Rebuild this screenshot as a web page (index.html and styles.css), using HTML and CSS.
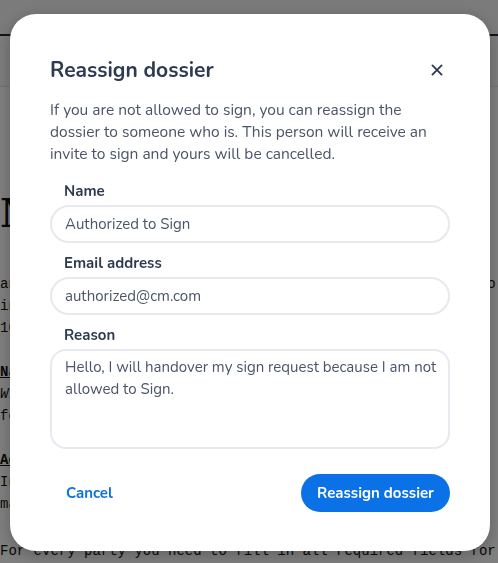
FILE: index.html
```html
<!DOCTYPE html>
<html>
<head>
  <title>Reassign dossier</title>
  <meta charset="utf-8">
  <link rel="stylesheet" href="styles.css">
</head>
<body>
  <div class="page">
    <div class="topbar"></div>
    <div class="subbar"></div>
    <div class="doc">
      <h1 class="doc-title">Mandate form:</h1>
      <p class="doc-lead">and signers are required to read this document carefully so
        in signing on behalf of an organisation, the authority to 10
        s.</p>
      <p><span class="doc-head">Name of the signing party</span><br>
        <em>Write the full legal name of the person or company minimum</em><br>
        fo the agreement as registered.</p>
      <p><span class="doc-head">Address of the signing party</span><br>
        In case the signing party is located outside the country a<br>
        mailing address.</p>
      <p class="doc-last">For every party you need to fill in all required fields for</p>
    </div>
  </div>

  <div class="overlay">
    <div class="modal">
      <div class="modal-header">
        <h2>Reassign dossier</h2>
        <button class="close-btn" aria-label="Close">
          <svg viewBox="0 0 24 24" fill="none" stroke="currentColor">
            <path stroke-linecap="round" stroke-width="2.2" d="M6.5 6.5l11 11M17.5 6.5l-11 11" />
          </svg>
        </button>
      </div>

      <p class="intro">If you are not allowed to sign, you can reassign the dossier to someone who is. This person will receive an invite to sign and yours will be cancelled.</p>

      <div class="fields">
        <label class="field">
          <span class="field-label">Name</span>
          <input class="input" type="text" value="Authorized to Sign">
        </label>
        <label class="field">
          <span class="field-label">Email address</span>
          <input class="input" type="email" value="authorized@cm.com">
        </label>
        <label class="field">
          <span class="field-label">Reason</span>
          <textarea class="input textarea">Hello, I will handover my sign request because I am not allowed to Sign.</textarea>
        </label>
      </div>

      <div class="modal-footer">
        <button class="cancel-btn">Cancel</button>
        <button class="primary-btn">Reassign dossier</button>
      </div>
    </div>
  </div>
</body>
</html>
```

FILE: styles.css
```css
body {
  margin: 0;
  font-family: "Nunito", "Lato", "Noto Sans", sans-serif;
  background-color: #ffffff;
  overflow: hidden;
}

.page {
  width: 498px;
  height: 563px;
  overflow: hidden;
}

.topbar {
  height: 34px;
  background-color: #f6f6f6;
  border-bottom: 2px solid #1f2937;
}

.subbar {
  height: 50px;
  background-color: #fafafa;
  border-bottom: 1px solid #e5e5e5;
}

.doc {
  font-family: "Liberation Mono", monospace;
  font-size: 14px;
  line-height: 22px;
  color: #111111;
}

.doc-title {
  font-family: "DejaVu Serif", serif;
  font-size: 40px;
  line-height: 48px;
  font-weight: 900;
  margin: 0;
  padding-top: 102px;
  display: flex;
  justify-content: space-between;
}

.doc p {
  margin: 22px 0 0;
}

.doc .doc-lead {
  margin-top: 36px;
}

.doc .doc-last {
  margin-top: 25px;
}

.doc-head {
  font-weight: bold;
  text-decoration: underline;
}

.overlay {
  position: fixed;
  inset: 0;
  background-color: rgba(0, 0, 0, 0.5);
}

.modal {
  position: absolute;
  top: 14px;
  left: 10px;
  width: 480px;
  box-sizing: border-box;
  padding: 42px 40px 39px;
  background-color: #ffffff;
  border-radius: 26px;
  box-shadow: 0 4px 16px rgba(0, 0, 0, 0.25);
  color: #2e3a50;
}

.modal-header {
  display: flex;
  align-items: center;
  justify-content: space-between;
}

h2 {
  margin: 0;
  font-size: 21px;
  line-height: 28px;
  font-weight: 700;
  color: #2e3a50;
}

.close-btn {
  width: 20px;
  height: 20px;
  padding: 0;
  margin-right: 3px;
  border: none;
  background: none;
  color: #2e3a50;
  cursor: pointer;
}

.close-btn svg {
  width: 20px;
  height: 20px;
  display: block;
}

.intro {
  margin: 15px 0 0;
  max-width: 392px;
  font-size: 15.5px;
  line-height: 22px;
  color: #4b5568;
}

.fields {
  margin-top: 16px;
  display: flex;
  flex-direction: column;
  gap: 10px;
}

.field {
  display: flex;
  flex-direction: column;
  gap: 4px;
}

.field-label {
  padding-left: 14px;
  font-size: 15px;
  line-height: 20px;
  font-weight: 700;
  color: #2e3a50;
}

.input {
  box-sizing: border-box;
  width: 100%;
  height: 38px;
  padding: 0 13px;
  border: 2px solid #e8e8ee;
  border-radius: 20px;
  font-family: inherit;
  font-size: 15px;
  color: #4b5568;
  background-color: #ffffff;
  outline: none;
}

.textarea {
  height: 100px;
  padding: 5px 8px 5px 13px;
  line-height: 22px;
  border-radius: 16px;
  resize: none;
}

.modal-footer {
  margin-top: 25px;
  display: flex;
  align-items: center;
  justify-content: space-between;
}

.cancel-btn {
  padding: 0 16px;
  border: none;
  background: none;
  font-family: inherit;
  font-size: 15px;
  font-weight: 700;
  color: #0b72e0;
  cursor: pointer;
}

.primary-btn {
  height: 38px;
  padding: 0 16px;
  border: none;
  border-radius: 20px;
  background-color: #0a72e6;
  color: #ffffff;
  font-family: inherit;
  font-size: 15px;
  font-weight: 700;
  cursor: pointer;
}
```
